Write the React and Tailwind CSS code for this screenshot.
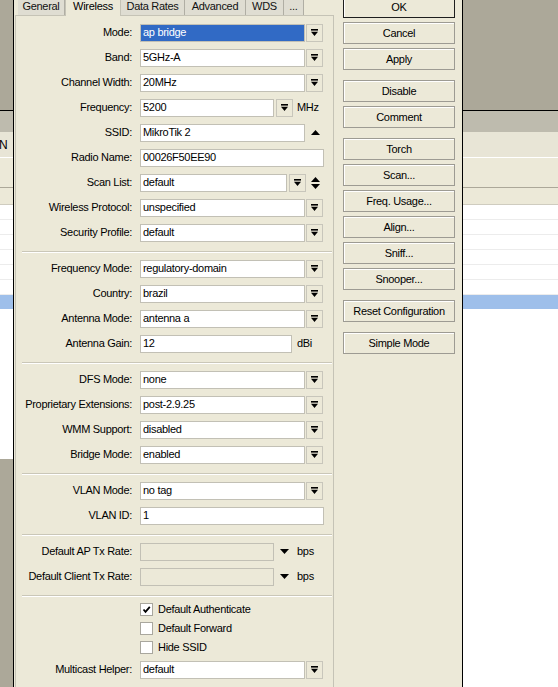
import React from 'react';

// toolbar-style drop arrow (bar over a triangle)
const DropGlyph = () => (
  <svg width="7" height="7" viewBox="0 0 7 7" aria-hidden="true">
    <rect x="0" y="0" width="7" height="1.6" fill="#000" />
    <polygon points="0,2.8 7,2.8 3.5,7" fill="#000" />
  </svg>
);

const DropButton = () => (
  <div className="ml-[1px] flex h-[18px] w-[17px] shrink-0 items-center justify-center border border-[#c8c6bb] bg-[#ece9d8]">
    <DropGlyph />
  </div>
);

const Field = ({ value, className, selected }) => (
  <div className={className}>
    {selected ? (
      <div className="flex h-full w-full items-center bg-[#316ac5] pl-[2px] text-white">{value}</div>
    ) : (
      <span className="pl-[2px]">{value}</span>
    )}
  </div>
);

const Row = ({ label, children }) => (
  <div className="flex h-[25px] items-center">
    <div className="w-[116px] shrink-0 text-right">{label}</div>
    <div className="ml-[8px] flex items-center">{children}</div>
  </div>
);

const SelectRow = ({ label, value, selected }) => (
  <Row label={label}>
    <Field
      value={value}
      selected={selected}
      className="flex h-[18px] w-[165px] items-center border border-[#c2c0b5] bg-white"
    />
    <DropButton />
  </Row>
);

const TextRow = ({ label, value }) => (
  <Row label={label}>
    <Field value={value} className="flex h-[18px] w-[184px] items-center border border-[#c2c0b5] bg-white" />
  </Row>
);

const Separator = () => (
  <div className="ml-[6px] mr-[1px] pt-[6px] pb-[3px]">
    <div className="h-px bg-[#cac7b8]" />
    <div className="h-px bg-white" />
  </div>
);

const RateRow = ({ label }) => (
  <Row label={label}>
    <div className="h-[18px] w-[134px] border border-[#c2c0b5] bg-[#ece9d8]" />
    <svg className="ml-[6px]" width="9" height="5" viewBox="0 0 9 5" aria-hidden="true">
      <polygon points="0,0 9,0 4.5,5" fill="#000" />
    </svg>
    <span className="ml-[8px]">bps</span>
  </Row>
);

const Check = ({ label, checked }) => (
  <div className="flex h-[19px] items-center pl-[124px]">
    <div className="flex h-[13px] w-[13px] items-center justify-center border border-[#a9a79e] bg-white">
      {checked && (
        <svg width="9" height="9" viewBox="0 0 9 9" aria-hidden="true">
          <polyline points="1.5,4.5 3.5,6.8 7.8,1.8" fill="none" stroke="#000" strokeWidth="1.8" />
        </svg>
      )}
    </div>
    <span className="ml-[5px]">{label}</span>
  </div>
);

const Btn = ({ children, className }) => (
  <div className={className}>{children}</div>
);

const btn =
  'flex h-[22px] items-center justify-center border border-[#9d9b93] bg-[#ece9d8] shadow-[inset_1px_1px_0_#ffffff]';

const BgTop = ({ n }) => (
  <>
    <div className="h-[110px] bg-[#aca899]" />
    <div className="h-px bg-black" />
    <div className="h-[21px] bg-[#bebbae]" />
    <div className="flex h-[26px] items-center border-b border-white bg-[#e8e5d6] text-[12px]">
      {n && <span className="-ml-[1px]">N</span>}
    </div>
    <div className="h-[30px] border-b border-[#aca899] bg-[#ece9d8]" />
    <div className="h-[17px] border-b border-[#cfccbf] bg-[#ece9d8]" />
    {[0, 1, 2, 3, 4, 5].map((i) => (
      <div key={i} className="h-[15px] border-b border-[#ececec] bg-white" />
    ))}
    <div className="h-[14px] bg-[#9ebfea]" />
  </>
);

const tabs = [
  { name: 'General', w: 'w-[47px]' },
  { name: 'Wireless', w: 'w-[56px]', active: true },
  { name: 'Data Rates', w: 'w-[64px]' },
  { name: 'Advanced', w: 'w-[61px]' },
  { name: 'WDS', w: 'w-[38px]' },
  { name: '...', w: 'w-[20px]' },
];

export default function App() {
  return (
    <div className="flex h-[687px] w-[558px] overflow-hidden bg-white font-['Liberation_Sans',Arial,sans-serif] text-[11px] leading-none tracking-[-0.3px] text-black">
      {/* app behind, left edge */}
      <div className="flex w-[13px] shrink-0 flex-col">
        <BgTop n />
        <div className="h-[150px] bg-white" />
        <div className="flex-1 bg-[#aca899]" />
      </div>
      <div className="w-px shrink-0 bg-black" />

      {/* dialog window */}
      <div className="flex w-[448px] shrink-0 bg-[#ece9d8]">
        <div className="ml-[1px] flex w-[319px] shrink-0 flex-col">
          <div className="flex h-[15px] items-end pl-[3px]">
            {tabs.map((t) =>
              t.active ? (
                <div
                  key={t.name}
                  className={`${t.w} relative z-10 -mb-px flex h-[16px] items-start justify-center border-r border-l border-[#c5c3b6] bg-[#ece9d8] pt-[1px]`}
                >
                  {t.name}
                </div>
              ) : (
                <div
                  key={t.name}
                  className={`${t.w} flex h-[15px] items-center justify-center border-r border-[#b0aea4] bg-[#dfddd2] pb-[2px] text-[#111]`}
                >
                  {t.name}
                </div>
              )
            )}
          </div>
          <div className="flex-1 border-t border-r border-l border-[#c5c3b6] pt-[4px]">
            <SelectRow label="Mode:" value="ap bridge" selected />
            <SelectRow label="Band:" value="5GHz-A" />
            <SelectRow label="Channel Width:" value="20MHz" />
            <Row label="Frequency:">
              <Field value="5200" className="flex h-[18px] w-[134px] items-center border border-[#c2c0b5] bg-white" />
              <div className="ml-[1px]">
                <DropButton />
              </div>
              <span className="ml-[4px]">MHz</span>
            </Row>
            <Row label="SSID:">
              <Field value="MikroTik 2" className="flex h-[18px] w-[165px] items-center border border-[#c2c0b5] bg-white" />
              <svg className="ml-[6px]" width="9" height="5" viewBox="0 0 9 5" aria-hidden="true">
                <polygon points="0,5 9,5 4.5,0" fill="#000" />
              </svg>
            </Row>
            <TextRow label="Radio Name:" value="00026F50EE90" />
            <Row label="Scan List:">
              <Field value="default" className="flex h-[18px] w-[147px] items-center border border-[#c2c0b5] bg-white" />
              <div className="ml-[1px]">
                <DropButton />
              </div>
              <svg className="ml-[5px]" width="9" height="12" viewBox="0 0 9 12" aria-hidden="true">
                <polygon points="0,5 9,5 4.5,0" fill="#000" />
                <polygon points="0,7 9,7 4.5,12" fill="#000" />
              </svg>
            </Row>
            <SelectRow label="Wireless Protocol:" value="unspecified" />
            <SelectRow label="Security Profile:" value="default" />
            <Separator />
            <SelectRow label="Frequency Mode:" value="regulatory-domain" />
            <SelectRow label="Country:" value="brazil" />
            <SelectRow label="Antenna Mode:" value="antenna a" />
            <Row label="Antenna Gain:">
              <Field value="12" className="flex h-[18px] w-[152px] items-center border border-[#c2c0b5] bg-white" />
              <span className="ml-[5px]">dBi</span>
            </Row>
            <Separator />
            <SelectRow label="DFS Mode:" value="none" />
            <SelectRow label="Proprietary Extensions:" value="post-2.9.25" />
            <SelectRow label="WMM Support:" value="disabled" />
            <SelectRow label="Bridge Mode:" value="enabled" />
            <Separator />
            <SelectRow label="VLAN Mode:" value="no tag" />
            <TextRow label="VLAN ID:" value="1" />
            <Separator />
            <RateRow label="Default AP Tx Rate:" />
            <RateRow label="Default Client Tx Rate:" />
            <Separator />
            <Check label="Default Authenticate" checked />
            <Check label="Default Forward" />
            <Check label="Hide SSID" />
            <SelectRow label="Multicast Helper:" value="default" />
          </div>
        </div>

        {/* button column */}
        <div className="-mt-[4px] ml-[9px] flex w-[112px] shrink-0 flex-col">
          <Btn className="flex h-[22px] items-center justify-center border border-[#1e1e1e] bg-[#ece9d8] shadow-[inset_1px_1px_0_#ffffff]">OK</Btn>
          <Btn className={`${btn} mt-[4px]`}>Cancel</Btn>
          <Btn className={`${btn} mt-[4px]`}>Apply</Btn>
          <Btn className={`${btn} mt-[10px]`}>Disable</Btn>
          <Btn className={`${btn} mt-[4px]`}>Comment</Btn>
          <Btn className={`${btn} mt-[10px]`}>Torch</Btn>
          <Btn className={`${btn} mt-[4px]`}>Scan...</Btn>
          <Btn className={`${btn} mt-[4px]`}>Freq. Usage...</Btn>
          <Btn className={`${btn} mt-[4px]`}>Align...</Btn>
          <Btn className={`${btn} mt-[4px]`}>Sniff...</Btn>
          <Btn className={`${btn} mt-[4px]`}>Snooper...</Btn>
          <Btn className={`${btn} mt-[10px]`}>Reset Configuration</Btn>
          <Btn className={`${btn} mt-[10px]`}>Simple Mode</Btn>
        </div>
      </div>
      <div className="w-px shrink-0 bg-black" />

      {/* app behind, right side */}
      <div className="flex flex-1 flex-col">
        <BgTop />
        <div className="flex-1 bg-white" />
      </div>
    </div>
  );
}
